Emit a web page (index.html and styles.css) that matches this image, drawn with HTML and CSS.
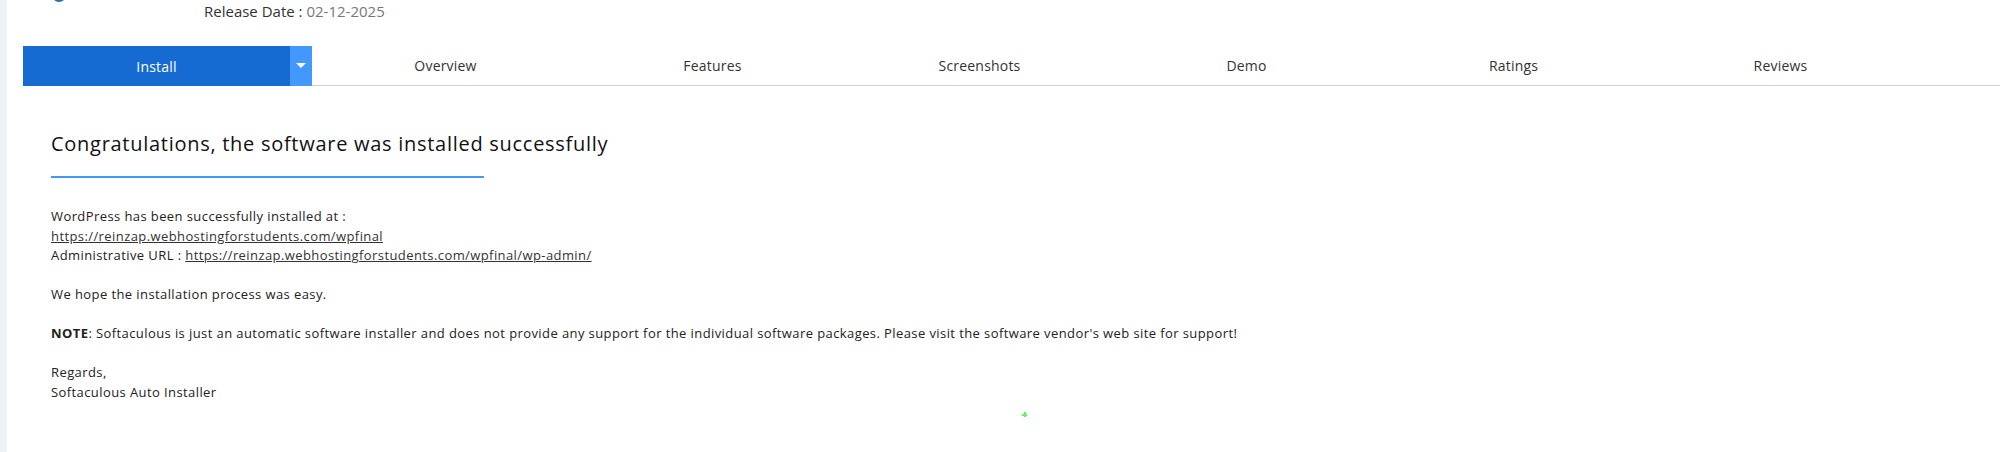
FILE: index.html
```html
<!DOCTYPE html>
<html lang="en">
<head>
    <meta charset="UTF-8">
    <meta name="viewport" content="width=device-width, initial-scale=1.0">
    <title>WordPress - Install</title>
    <link rel="stylesheet" href="styles.css">
</head>
<body>
    <div class="page">
        <div class="app-head">
            <span class="app-logo"></span>
            <div class="app-meta">
                <span class="meta-label">Release Date :</span> <span class="meta-value">02-12-2025</span>
            </div>
        </div>

        <ul class="tabs">
            <li class="tab tab-install">
                <span class="tab-main">Install</span>
                <span class="tab-drop">
                    <svg width="10" height="6" viewBox="0 0 10 6"><path d="M0 0h10L5 5z" fill="#fff"/></svg>
                </span>
            </li>
            <li class="tab">Overview</li>
            <li class="tab">Features</li>
            <li class="tab">Screenshots</li>
            <li class="tab">Demo</li>
            <li class="tab">Ratings</li>
            <li class="tab">Reviews</li>
        </ul>

        <div class="result">
            <h2 class="result-title">Congratulations, the software was installed successfully</h2>
            <div class="result-line"></div>
            <p class="result-text">
                WordPress has been successfully installed at :<br>
                <a href="#">https://reinzap.webhostingforstudents.com/wpfinal</a><br>
                Administrative URL : <a href="#">https://reinzap.webhostingforstudents.com/wpfinal/wp-admin/</a><br>
                <br>
                We hope the installation process was easy.<br>
                <br>
                <b>NOTE</b>: Softaculous is just an automatic software installer and does not provide any support for the individual software packages. Please visit the software vendor's web site for support!<br>
                <br>
                Regards,<br>
                Softaculous Auto Installer
            </p>
        </div>
    </div>
    <span class="cursor-mark"></span>
</body>
</html>
```

FILE: styles.css
```css
body {
    margin: 0;
    font-family: "Open Sans", Arial, sans-serif;
    color: #222;
    background-color: #fff;
    height: 452px;
    overflow: hidden;
    position: relative;
}
.page {
    border-left: 7px solid #eef2f6;
    min-height: 452px;
    box-sizing: border-box;
}

/* header strip (scrolled, only the bottom shows) */
.app-head {
    display: flex;
    align-items: flex-start;
    height: 26px;
    padding-left: 45px;
}
.app-logo {
    width: 14px;
    height: 14px;
    border-radius: 50%;
    background-color: #2a6f9e;
    margin-top: -12px;
}
.app-meta {
    margin-left: 138px;
    font-size: 15px;
    line-height: 22px;
}
.meta-label {
    color: #333;
}
.meta-value {
    color: #777;
}

/* tab bar */
.tabs {
    list-style: none;
    margin: 20px 0 0 16px;
    padding: 0;
    display: flex;
    border-bottom: 1px solid #cfcfcf;
}
.tab {
    flex: 0 0 267px;
    height: 39px;
    display: flex;
    align-items: center;
    justify-content: center;
    font-size: 14px;
    letter-spacing: 0.2px;
    color: #333;
}
.tab-install {
    flex: 0 0 289px;
    height: 40px;
    margin-bottom: -1px;
    color: #fff;
}
.tab-main {
    flex: 1;
    height: 100%;
    display: flex;
    align-items: center;
    justify-content: center;
    background-color: #166bd3;
}
.tab-drop {
    width: 22px;
    height: 100%;
    display: flex;
    align-items: center;
    justify-content: center;
    background-color: #4298fb;
}

/* success message */
.result {
    padding: 44px 0 0 44px;
}
.result-title {
    margin: 0;
    font-size: 20px;
    font-weight: 400;
    line-height: 28px;
    letter-spacing: 0.72px;
    color: #111;
}
.result-line {
    width: 433px;
    height: 2px;
    background-color: #4299f5;
    margin-top: 18px;
}
.result-text {
    margin: 29px 0 0;
    font-size: 13px;
    line-height: 19.5px;
    letter-spacing: 0.41px;
    color: #222;
}
.result-text a {
    color: #333;
}
.result-text b {
    font-weight: 700;
}

.cursor-mark {
    position: absolute;
    left: 1022px;
    top: 412px;
    width: 5px;
    height: 5px;
    background:
        linear-gradient(#5ef55e, #5ef55e) center / 5px 2px no-repeat,
        linear-gradient(#5ef55e, #5ef55e) center / 2px 5px no-repeat;
}
```
